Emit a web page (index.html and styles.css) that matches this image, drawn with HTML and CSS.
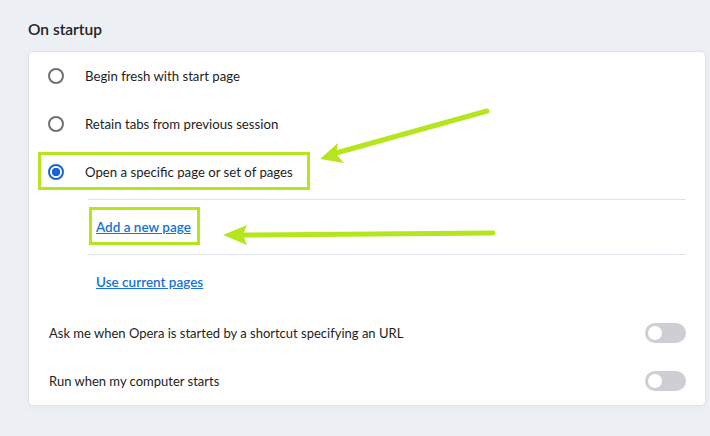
FILE: index.html
```html
<!DOCTYPE html>
<html lang="en">
<head>
  <meta charset="UTF-8">
  <meta name="viewport" content="width=device-width, initial-scale=1.0">
  <title>Settings - On startup</title>
  <link rel="stylesheet" href="styles.css">
</head>
<body>
  <div class="page">
    <h2 class="section-title">On startup</h2>

    <div class="card">
      <!-- Startup choice -->
      <label class="radio-row">
        <span class="radio"></span>
        <span class="row-label">Begin fresh with start page</span>
      </label>
      <label class="radio-row">
        <span class="radio"></span>
        <span class="row-label">Retain tabs from previous session</span>
      </label>
      <label class="radio-row">
        <span class="radio checked"></span>
        <span class="row-label">Open a specific page or set of pages</span>
      </label>

      <div class="page-list">
        <div class="page-list-row"><a href="#" class="link">Add a new page</a></div>
        <div class="page-list-row"><a href="#" class="link">Use current pages</a></div>
      </div>

      <!-- Toggles -->
      <div class="toggle-row">
        <span class="row-text">Ask me when Opera is started by a shortcut specifying an URL</span>
        <span class="toggle"></span>
      </div>
      <div class="toggle-row">
        <span class="row-text">Run when my computer starts</span>
        <span class="toggle"></span>
      </div>
    </div>
  </div>

  <!-- Highlight marks drawn over the page -->
  <svg class="marks" width="710" height="436" viewBox="0 0 710 436">
    <g fill="none" stroke="#b5e51d" stroke-width="3">
      <rect x="39.5" y="153.5" width="269" height="35"/>
      <rect x="90.5" y="208.5" width="108" height="35"/>
    </g>
    <g stroke="#b5e51d" stroke-width="5" stroke-linecap="round">
      <line x1="487" y1="111" x2="336" y2="153"/>
      <line x1="493" y1="233" x2="242" y2="235"/>
    </g>
    <g fill="#b5e51d">
      <polygon points="320,159 338,143 336,154 344,163"/>
      <polygon points="223,235 247,225 243,235 247,245"/>
    </g>
  </svg>
</body>
</html>
```

FILE: styles.css
```css
* {
  margin: 0;
  padding: 0;
  box-sizing: border-box;
}

body {
  font-family: Lato, 'Liberation Sans', sans-serif;
  background: #edf1f5;
  color: #1d1d22;
  width: 710px;
  height: 436px;
  overflow: hidden;
  position: relative;
}

.page {
  padding: 19px 4px 0 28px;
}

.section-title {
  font-size: 15.5px;
  font-weight: 600;
  line-height: 20px;
  color: #222226;
  margin-bottom: 12px;
}

.card {
  background: white;
  border: 1px solid #dde3ea;
  border-radius: 5px;
  box-shadow: 0 2px 8px rgba(60, 80, 110, 0.05);
}

.radio-row {
  display: flex;
  align-items: center;
  height: 48px;
  padding-left: 19px;
  font-size: 13.2px;
}

.radio {
  width: 16px;
  height: 16px;
  border-radius: 50%;
  border: 2px solid #6f6f74;
  margin-right: 21px;
  flex-shrink: 0;
}

.radio.checked {
  border-color: #1663d6;
  background: radial-gradient(circle, #1663d6 0 4px, white 4.5px);
}

.page-list {
  margin: 3px 19px 0 59px;
}

.page-list-row {
  height: 55px;
  border-top: 1px solid #dde4ec;
  display: flex;
  align-items: center;
  padding-left: 8px;
}

.link {
  font-size: 13.5px;
  font-weight: 600;
  color: #1572d6;
  text-decoration: underline;
}

.toggle-row {
  display: flex;
  align-items: center;
  justify-content: space-between;
  height: 48px;
  padding: 0 19px 0 20px;
  font-size: 13px;
}

.toggle {
  width: 41px;
  height: 20px;
  border-radius: 10px;
  background: #cfced4;
  position: relative;
}

.toggle::after {
  content: "";
  position: absolute;
  left: 3px;
  top: 3px;
  width: 14px;
  height: 14px;
  border-radius: 50%;
  background: white;
}

.marks {
  position: absolute;
  left: 0;
  top: 0;
  pointer-events: none;
}
```
